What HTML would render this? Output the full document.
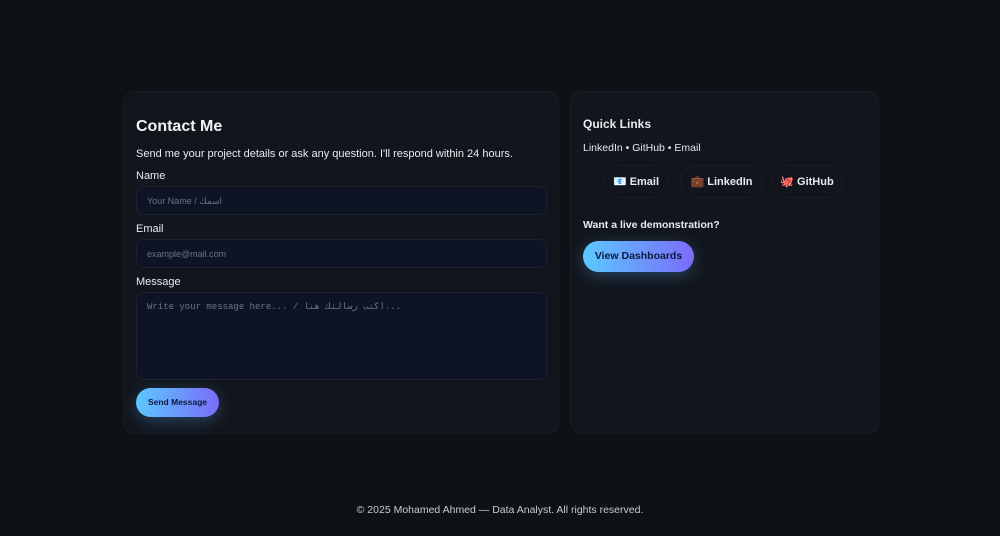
<!DOCTYPE html>
<html><head><meta charset="utf-8"><style>
*{box-sizing:border-box;margin:0;padding:0}
body{width:1000px;height:536px;background:#0e1116;font-family:"Liberation Sans","DejaVu Sans",sans-serif;color:#e8eaf0;position:relative;overflow:hidden}
.card{position:absolute;top:91px;height:343px;background:#12151c;border:1px solid #191d25;border-radius:12px}
.l{left:123px;width:436px;padding:0 12px}
.r{left:570px;width:309px;padding:0 12px}
h2{position:absolute;left:12px;top:26px;font-size:16px;font-weight:bold;color:#f2f4f8}
.abs{position:absolute}
.lab{font-size:11px;color:#e8eaf0}
.in{position:absolute;left:12px;width:411px;height:29px;background:#0f1424;border:1px solid #1b2236;border-radius:7px;font-size:9px;color:#6b7385;padding:9px 10px}
.btn{position:absolute;border-radius:16px;background:linear-gradient(90deg,#5cc8ff,#7a6cf8);color:#0e1a3a;font-weight:bold;box-shadow:0 4px 16px rgba(90,180,255,.3)}
.pill{position:absolute;top:73px;height:33px;border:1px solid #1a1e26;border-radius:17px;font-size:11px;font-weight:bold;color:#e8eaf0;text-align:center;line-height:33px}
</style></head><body>
<div class="card l">
<h2>Contact Me</h2>
<div class="abs" style="left:12px;top:56px;font-size:11px">Send me your project details or ask any question. I'll respond within 24 hours.</div>
<div class="abs lab" style="left:12px;top:78px">Name</div>
<div class="in" style="top:94px">Your Name / اسمك</div>
<div class="abs lab" style="left:12px;top:131px">Email</div>
<div class="in" style="top:147px">example@mail.com</div>
<div class="abs lab" style="left:12px;top:184px">Message</div>
<div class="in" style="top:200px;height:88px;font-family:'Liberation Mono',monospace;padding-top:9px">Write your message here... / اكتب رسالتك هنا...</div>
<div class="btn" style="left:12px;top:296px;width:83px;height:29px;font-size:8.5px;line-height:29px;text-align:center">Send Message</div>
</div>
<div class="card r">
<div class="abs" style="left:12px;top:25px;font-size:12px;font-weight:bold">Quick Links</div>
<div class="abs" style="left:12px;top:50px;font-size:10.5px">LinkedIn • GitHub • Email</div>
<div class="pill" style="left:32px;width:66px">📧 Email</div>
<div class="pill" style="left:109px;width:83px">💼 LinkedIn</div>
<div class="pill" style="left:200px;width:72px">🐙 GitHub</div>
<div class="abs" style="left:12px;top:127px;font-size:10.5px;font-weight:bold">Want a live demonstration?</div>
<div class="btn" style="left:12px;top:149px;width:111px;height:31px;font-size:10.5px;line-height:31px;text-align:center">View Dashboards</div>
</div>
<div class="abs" style="left:0;width:1000px;top:504px;text-align:center;font-size:10.5px;color:#c8ccd4">© 2025 Mohamed Ahmed — Data Analyst. All rights reserved.</div>
</body></html>
